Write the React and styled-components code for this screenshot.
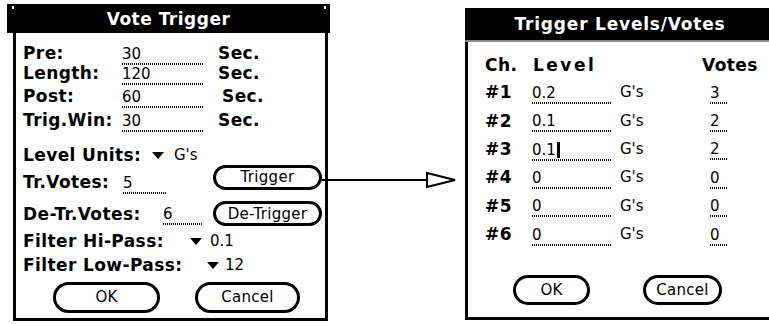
import React from 'react'
import styled, { createGlobalStyle } from 'styled-components'

const GlobalStyle = createGlobalStyle`
  html, body {
    margin: 0;
    padding: 0;
    background: #fff;
  }
  body {
    font-family: "DejaVu Sans", Verdana, sans-serif;
    color: #000;
  }
`

const Screen = styled.div`
  display: flex;
  align-items: flex-start;
  width: 769px;
  height: 324px;
  overflow: hidden;
  background: #fff;
`

const Dialog = styled.div`
  display: flex;
  flex-direction: column;
  flex: none;
  width: ${p => p.w}px;
  margin-top: ${p => p.top}px;
  margin-left: ${p => p.left || 0}px;
`

const TitleBar = styled.div`
  position: relative;
  display: flex;
  align-items: center;
  justify-content: center;
  height: ${p => p.h}px;
  background: #000;
  color: #fff;
  font-weight: bold;
  font-size: 17px;
  letter-spacing: ${p => p.ls || 0.5}px;
  border-bottom: ${p => (p.rule ? '2px solid #8a8a8a' : 'none')};
`

const CornerDot = styled.span`
  position: absolute;
  top: 2px;
  ${p => (p.right ? 'right: 4px;' : 'left: 5px;')}
  width: 2px;
  height: 3px;
  background: #fff;
`

const Body = styled.div`
  display: flex;
  flex-direction: column;
  height: ${p => p.h}px;
  margin: ${p => p.margin};
  padding: ${p => p.pad};
  border: 3px solid #000;
  border-top: none;
  ${p => (p.open ? 'border-right: none;' : '')}
  box-sizing: border-box;
`

const Row = styled.div`
  display: flex;
  align-items: center;
  flex: none;
  height: ${p => p.h}px;
  margin-top: ${p => p.mt || 0}px;
`

const Label = styled.span`
  flex: none;
  width: ${p => (p.w ? `${p.w}px` : 'auto')};
  margin-left: ${p => p.ml || 0}px;
  font-weight: bold;
  font-size: 17px;
  letter-spacing: ${p => p.ls ?? 0.4}px;
  white-space: nowrap;
`

const Text = styled.span`
  flex: none;
  width: ${p => (p.w ? `${p.w}px` : 'auto')};
  margin-left: ${p => p.ml || 0}px;
  font-size: 15px;
  white-space: nowrap;
`

const Field = styled.span`
  display: inline-flex;
  align-items: flex-end;
  flex: none;
  width: ${p => p.w}px;
  margin-left: ${p => p.ml || 0}px;
  padding-bottom: 3px;
  margin-top: 5px;
  font-size: 15px;
  line-height: 15px;
  background-image: repeating-linear-gradient(90deg, #000 0 1px, transparent 1px 2px);
  background-size: 100% 2px;
  background-position: left bottom;
  background-repeat: no-repeat;
`

const Caret = styled.span`
  display: inline-block;
  width: 3px;
  height: 16px;
  margin-left: 1px;
  background: #000;
`

const PopTrigger = styled.span`
  flex: none;
  width: 0;
  height: 0;
  margin-left: ${p => p.ml || 0}px;
  border-left: 6px solid transparent;
  border-right: 6px solid transparent;
  border-top: 7px solid #000;
`

const Button = styled.button`
  flex: none;
  display: flex;
  align-items: center;
  justify-content: center;
  box-sizing: border-box;
  width: ${p => p.w}px;
  height: ${p => p.h}px;
  margin-left: ${p => p.ml || 0}px;
  margin-bottom: ${p => p.lift || 0}px;
  padding: 0;
  background: #fff;
  color: #000;
  border: 3px solid #000;
  border-radius: ${p => Math.round(p.h / 2)}px;
  font-family: "DejaVu Sans", Verdana, sans-serif;
  font-size: 15px;
  letter-spacing: 0.3px;
`

const Connector = styled.svg`
  flex: none;
  margin-left: -8px;
  margin-top: 170px;
`

const timing = [
  { label: 'Pre:', value: '30', sec: 15 },
  { label: 'Length:', value: '120', sec: 15 },
  { label: 'Post:', value: '60', sec: 19, h: 26 },
  { label: 'Trig.Win:', value: '30', sec: 15, h: 22 },
]

const channels = [
  { ch: '#1', level: '0.2', votes: '3' },
  { ch: '#2', level: '0.1', votes: '2' },
  { ch: '#3', level: '0.1', votes: '2', caret: true },
  { ch: '#4', level: '0', votes: '0' },
  { ch: '#5', level: '0', votes: '0' },
  { ch: '#6', level: '0', votes: '0' },
]

const VoteTrigger = () => (
  <Dialog w={323} top={4} left={7}>
    <TitleBar h={29}>
      <CornerDot />
      Vote Trigger
      <CornerDot right />
    </TitleBar>
    <Body h={288} margin="0 2px 0 6px" pad="10px 0 0 7px">
      {timing.map(t => (
        <Row key={t.label} h={t.h || 20}>
          <Label w={99}>{t.label}</Label>
          <Field w={81}>{t.value}</Field>
          <Label ml={t.sec}>Sec.</Label>
        </Row>
      ))}
      <Row h={28} mt={10}>
        <Label w={129}>Level Units:</Label>
        <PopTrigger />
        <Text ml={10}>G's</Text>
      </Row>
      <Row h={26}>
        <Label w={100}>Tr.Votes:</Label>
        <Field w={44}>5</Field>
        <Button w={109} h={25} ml={46} lift={10}>Trigger</Button>
      </Row>
      <Row h={37}>
        <Label w={140}>De-Tr.Votes:</Label>
        <Field w={40}>6</Field>
        <Button w={109} h={25} ml={10}>De-Trigger</Button>
      </Row>
      <Row h={18}>
        <Label w={167}>Filter Hi-Pass:</Label>
        <PopTrigger />
        <Text ml={8}>0.1</Text>
      </Row>
      <Row h={30}>
        <Label w={184}>Filter Low-Pass:</Label>
        <PopTrigger />
        <Text ml={6}>12</Text>
      </Row>
      <Row h={34}>
        <Button w={107} h={31} ml={30}>OK</Button>
        <Button w={105} h={31} ml={35}>Cancel</Button>
      </Row>
    </Body>
  </Dialog>
)

const TriggerLevels = () => (
  <Dialog w={310} top={8}>
    <TitleBar h={32} ls={0.8} rule>Trigger Levels/Votes</TitleBar>
    <Body h={278} margin="0" pad="10px 0 0 17px" open>
      <Row h={26}>
        <Label w={48}>Ch.</Label>
        <Label w={169} ls={2.5}>Level</Label>
        <Label>Votes</Label>
      </Row>
      {channels.map(c => (
        <Row key={c.ch} h={28.4}>
          <Label w={47}>{c.ch}</Label>
          <Field w={80}>
            {c.level}
            {c.caret && <Caret />}
          </Field>
          <Text w={90} ml={8}>G's</Text>
          <Field w={18}>{c.votes}</Field>
        </Row>
      ))}
      <Row h={30} mt={27}>
        <Button w={77} h={30} ml={28}>OK</Button>
        <Button w={79} h={30} ml={53}>Cancel</Button>
      </Row>
    </Body>
  </Dialog>
)

export default function App() {
  return (
    <>
      <GlobalStyle />
      <Screen>
        <VoteTrigger />
        <Connector width="143" height="20" viewBox="0 0 143 20">
          <line x1="0" y1="10" x2="105" y2="10" stroke="#000" strokeWidth="2" />
          <polygon points="105,3 133,10 105,17" fill="#fff" stroke="#000" strokeWidth="2" />
        </Connector>
        <TriggerLevels />
      </Screen>
    </>
  )
}
